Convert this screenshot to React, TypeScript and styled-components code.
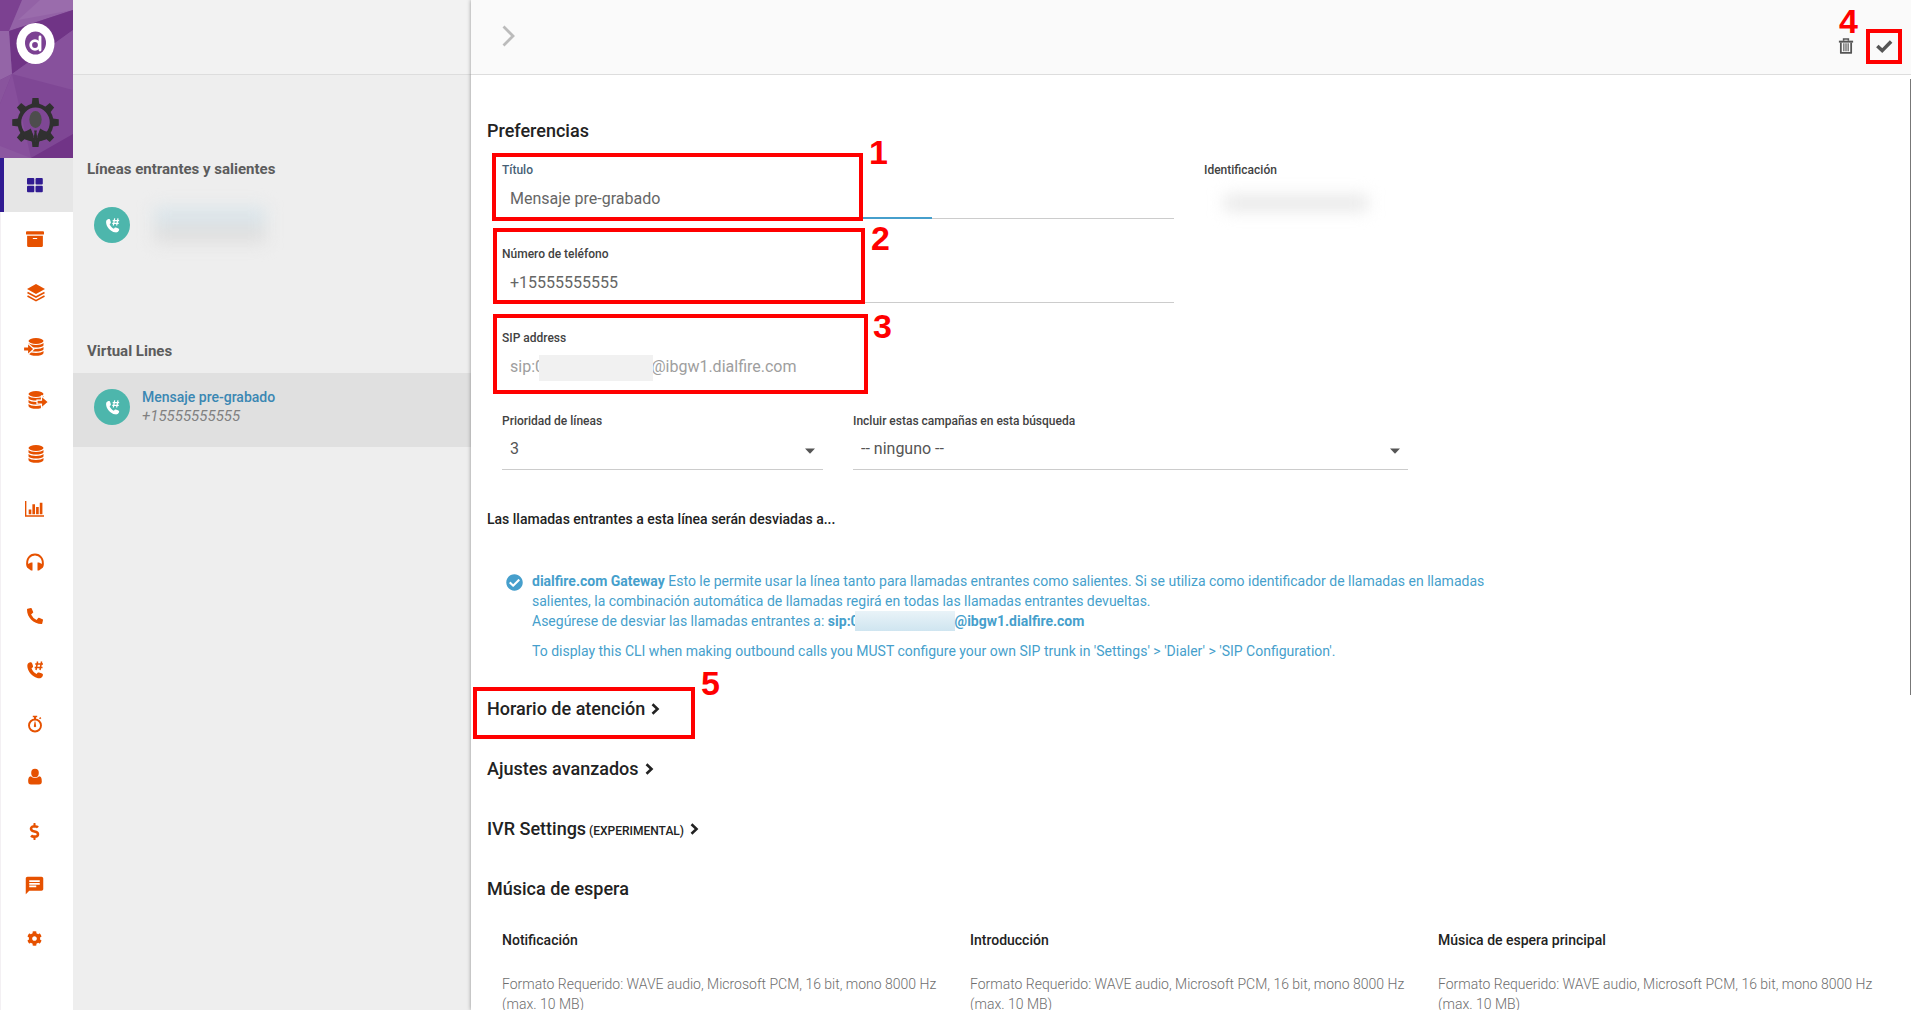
import React from "react";
import styled, { createGlobalStyle, css } from "styled-components";
import { FaArchive, FaCheckCircle, FaCog, FaDollarSign, FaPhoneAlt } from "react-icons/fa";
import { MdChat } from "react-icons/md";

const color = {
  orange: "#e65100",
  indigo: "#311b92",
  teal: "#4db6ac",
  blue: "#469fcc",
  link: "#3a87b3",
  ink: "#222222",
  mark: "#ff0000",
};

const GlobalStyle = createGlobalStyle`
  *, *::before, *::after { box-sizing: border-box; }
  html, body, #root { height: 100%; }
  body {
    margin: 0;
    overflow: hidden;
    background: #fff;
    color: ${color.ink};
    font-family: Roboto, "Liberation Sans", sans-serif;
    font-size: 14px;
    line-height: 20px;
  }
  h1, h2, h3, p, ul { margin: 0; padding: 0; }
  button, input, select { font: inherit; color: inherit; }
`;

const Shell = styled.div`
  display: flex;
  height: 100vh;
`;

/* ---------- navigation rail ---------- */

const Rail = styled.nav`
  flex: 0 0 73px;
  background: #fff;
  border-left: 1px solid #f3f0f3;
`;

const Brand = styled.div`
  height: 158px;
  margin-left: -1px;
  overflow: hidden;

  svg { display: block; }
`;

const RailList = styled.ul`
  display: flex;
  flex-direction: column;
  height: 80vh;
  margin-left: -1px;
  list-style: none;
`;

const RailItem = styled.li`
  flex: 1;
  display: flex;
`;

const RailLink = styled.a<{ $active?: boolean }>`
  flex: 1;
  display: flex;
  align-items: center;
  justify-content: center;
  padding-right: 4px;
  color: ${(p) => (p.$active ? color.indigo : color.orange)};
  ${(p) =>
    p.$active &&
    css`
      background: #e6e6e6;
      box-shadow: inset 4px 0 ${color.indigo};
    `}
`;

/* ---------- list of lines ---------- */

const Lines = styled.aside`
  flex: 0 0 398px;
  background: #eeeeee;
`;

const LinesHeader = styled.div`
  height: 75px;
  background: #f2f2f2;
  border-bottom: 1px solid #dddddd;
`;

const Group = styled.section`
  height: 182px;
  padding-top: 84px;
`;

const GroupTitle = styled.h2`
  padding-left: 14px;
  color: #5c5c5c;
  font-size: 15px;
  font-weight: 700;
  line-height: 20px;
`;

const LineItem = styled.a<{ $selected?: boolean }>`
  display: flex;
  gap: 12px;
  height: 74px;
  margin-top: 12px;
  padding: 16px 21px;
  background: ${(p) => (p.$selected ? "#e0e0e0" : "transparent")};
  text-decoration: none;
`;

const LineBadge = styled.span`
  display: flex;
  align-items: center;
  justify-content: center;
  flex: 0 0 36px;
  height: 36px;
  border-radius: 50%;
  background: ${color.teal};
  color: #fff;
`;

const LineText = styled.span`
  display: flex;
  flex-direction: column;
`;

const LineName = styled.span`
  color: ${color.link};
  font-size: 14px;
  font-weight: 500;
  line-height: 17px;
`;

const LineNumber = styled.span`
  color: #808080;
  font-size: 15px;
  font-style: italic;
  line-height: 20px;
`;

const BlurredLine = styled.span`
  width: 112px;
  height: 36px;
  margin-left: 12px;
  background: linear-gradient(#dbe5ea 50%, #dfdfdf 50%);
  filter: blur(8px);
`;

/* ---------- detail panel ---------- */

const Main = styled.main`
  position: relative;
  flex: 1;
  min-width: 0;
  background: #fff;
  box-shadow: 0 0 4px rgba(0, 0, 0, 0.4);
`;

const Toolbar = styled.header`
  display: flex;
  align-items: center;
  height: 75px;
  padding: 0 8px 2px 31px;
  background: #fafafa;
  border-bottom: 1px solid #dddddd;
`;

const IconButton = styled.button`
  display: flex;
  align-items: center;
  justify-content: center;
  position: relative;
  width: 38px;
  height: 36px;
  padding: 0;
  border: 0;
  background: none;
  color: #555555;
`;

const BackButton = styled.button`
  display: flex;
  margin-right: auto;
  padding: 0;
  border: 0;
  background: none;
  color: #bbbbbb;
`;

const Actions = styled.div`
  display: flex;
  padding-top: 20px;
`;

const Content = styled.div`
  height: calc(100vh - 75px);
  padding: 44px 20px 0 16px;
  overflow: hidden;
`;

const ScrollThumb = styled.div`
  position: absolute;
  top: 79px;
  right: 0;
  width: 1px;
  height: 61vh;
  background: #777777;
`;

const Heading = styled.h1`
  position: relative;
  font-size: 18px;
  font-weight: 500;
  line-height: 24px;
`;

const Grid = styled.div`
  display: grid;
  grid-template-columns: repeat(12, 1fr);
`;

const Form = styled(Grid)`
  row-gap: 25px;
  margin-top: 17px;
`;

const Cell = styled.div<{ $span: number; $start?: number }>`
  position: relative;
  grid-column: ${(p) => (p.$start ? `${p.$start} / ` : "")}span ${(p) => p.$span};
  padding: 0 15px;
`;

const FieldLabel = styled.label<{ $focus?: boolean }>`
  display: block;
  color: ${(p) => (p.$focus ? "#466075" : "#424242")};
  font-size: 12px;
  font-weight: 500;
  line-height: 20px;
`;

const Control = styled.div<{ $line?: boolean; $focus?: boolean }>`
  position: relative;
  ${(p) => p.$line && "border-bottom: 1px solid #cccccc;"}
  ${(p) =>
    p.$focus &&
    css`
      &::after {
        content: "";
        position: absolute;
        left: 36%;
        right: 36%;
        bottom: -1px;
        height: 2px;
        background: ${color.blue};
      }
    `}
`;

const controlText = css`
  display: block;
  width: 100%;
  height: 38px;
  padding: 0 8px 2px;
  border: 0;
  outline: 0;
  background: none;
  font-size: 16px;
  line-height: 20px;
`;

const TextBox = styled.input`
  ${controlText}
  color: #666666;

  &:disabled { color: #9e9e9e; }
`;

const Picker = styled.select`
  ${controlText}
  appearance: none;
  color: #555555;
`;

const Caret = styled.svg`
  position: absolute;
  top: 17px;
  right: 8px;
  width: 10px;
  height: 6px;
  fill: #555555;
  pointer-events: none;
`;

const SipMask = styled.span`
  position: absolute;
  top: 7px;
  left: 37px;
  width: 114px;
  height: 26px;
  background: #f1f1f1;
`;

const BlurredId = styled.div`
  width: 144px;
  height: 16px;
  margin: 15px 0 0 20px;
  background: #e8e8e8;
  filter: blur(8px);
`;

const SubHeading = styled.h2`
  margin-top: 39px;
  font-size: 14px;
  font-weight: 500;
  line-height: 20px;
`;

const Gateway = styled(Grid)`
  margin-top: 42px;
`;

const GatewayBody = styled(Cell)`
  display: flex;
  gap: 9px;
  padding-left: 19px;
  color: ${color.blue};

  svg { flex: none; margin-top: 3px; }
  p + p { margin-top: 10px; }
`;

const InlineMask = styled.span`
  display: inline-block;
  width: 100px;
  height: 20px;
  margin-left: -4px;
  background: linear-gradient(#e9f3f8, #cfe5f0);
  vertical-align: -5px;
`;

const Sections = styled.div`
  display: flex;
  flex-direction: column;
  gap: 36px;
  margin-top: 36px;
`;

const SectionToggle = styled.button`
  display: flex;
  align-items: center;
  gap: 6px;
  height: 24px;
  padding: 0;
  border: 0;
  background: none;
  line-height: 24px;
`;

const Small = styled.small`
  font-size: 12px;
  line-height: 12px;
  white-space: pre;
`;

const Music = styled(Grid)`
  margin-top: 29px;
`;

const MusicTitle = styled.h3`
  font-size: 14px;
  font-weight: 500;
  line-height: 20px;
`;

const MusicNote = styled.p`
  margin-top: 24px;
  color: #6e6e6e;
  font-weight: 300;
`;

/* ---------- numbered marks over the form ---------- */

type MarkBox = { $x: number; $y: number; $w: number; $h: number };

const Mark = styled.span<MarkBox>`
  position: absolute;
  left: ${(p) => p.$x}px;
  top: ${(p) => p.$y}px;
  width: ${(p) => p.$w}px;
  height: ${(p) => p.$h}px;
  border: 4px solid ${color.mark};
  z-index: 2;
  pointer-events: none;
`;

const MarkNumber = styled.span<{ $x: number; $y: number }>`
  position: absolute;
  left: ${(p) => p.$x}px;
  top: ${(p) => p.$y}px;
  color: ${color.mark};
  font: 700 34px/34px "Liberation Sans", Arial, sans-serif;
  z-index: 2;
`;

/* ---------- drawings ---------- */

const BrandArt = () => (
  <svg width="73" height="158" viewBox="0 0 73 158" aria-label="dialfire">
    <rect width="73" height="158" fill="#7f4795" />
    <path d="M0 0H22L9 31L0 32Z" fill="#7c4191" />
    <path d="M22 0H73V10L9 31Z" fill="#9362a6" />
    <path d="M40 0H73V10L18 20Z" fill="#9a6cac" />
    <path d="M73 10L9 31L12 74L73 30Z" fill="#703486" />
    <path d="M73 30L12 74L73 90Z" fill="#87519c" />
    <path d="M0 31H9L12 74L0 80Z" fill="#9465a7" />
    <path d="M12 74L0 80V104Z" fill="#89549d" />
    <path d="M12 74L0 104V158H31Z" fill="#874f9c" />
    <path d="M73 134L31 158H73Z" fill="#713487" />
    <path d="M0 146L31 158H0Z" fill="#8c58a0" />
    <ellipse cx="35.500" cy="43.500" rx="19" ry="20.500" fill="#fff" />
    <ellipse cx="35.500" cy="43" rx="10.500" ry="11.500" fill="#7b4192" />
    <circle cx="35" cy="45" r="4.300" fill="none" stroke="#fff" strokeWidth="2.800" />
    <path d="M40 37V50" stroke="#fff" strokeWidth="2.800" strokeLinecap="round" />
    <g transform="translate(35.500 122.500) scale(0.950 1)" fill="#303030">
      {[0, 45, 90, 135, 180, 225, 270, 315].map((a) => (
        <path key={a} transform={`rotate(${a})`} d="M-4 -18L-3.200 -24.500H3.200L4 -18Z" />
      ))}
      <circle r="17" fill="none" stroke="#303030" strokeWidth="4" />
      <ellipse cy="-3" rx="6.500" ry="8.500" fill="#4d4d4d" />
      <path d="M-15 10C-12 9 -7 8 -5 6L0 18L5 6C7 8 12 9 15 10L11 17L0 20L-11 17Z" />
      <path d="M-3.500 8L0 19L3.500 8L2 8L1.500 10L2 15L0 18L-2 15L-1.500 10L-2 8Z" fill="#7f4795" />
      <path d="M-1.500 8H1.500L1 10L2 16L0 18.500L-2 16L-1 10Z" />
    </g>
  </svg>
);

const Drawing = ({ size = 18, children }: { size?: number; children: React.ReactNode }) => (
  <svg width={size} height={size} viewBox="0 0 18 18" fill="currentColor" overflow="visible" aria-hidden="true">
    {children}
  </svg>
);

const GridIcon = () => (
  <Drawing>
    <rect x="1" y="2" width="7.300" height="6.600" rx="1" />
    <rect x="9.500" y="2" width="7.300" height="6.600" rx="1" />
    <rect x="1" y="9.700" width="7.300" height="6.600" rx="1" />
    <rect x="9.500" y="9.700" width="7.300" height="6.600" rx="1" />
  </Drawing>
);

const LayersIcon = () => (
  <Drawing>
    <path d="M10 0L19 5L10 10L1 5Z" />
    <path d="M1.500 8.500L10 13L18.500 8.500M1.500 12L10 16.700L18.500 12" fill="none" stroke="currentColor" strokeWidth="1.600" />
  </Drawing>
);

const Disks = () => (
  <>
    <ellipse cx="10" cy="3" rx="7.500" ry="2.900" />
    <path d="M2.500 5C4.500 7.600 15.500 7.600 17.500 5V7.500C15.500 10.300 4.500 10.300 2.500 7.500Z" />
    <path d="M2.500 9C4.500 11.600 15.500 11.600 17.500 9V11.500C15.500 14.200 4.500 14.200 2.500 11.500Z" />
    <path d="M2.500 13C4.500 15.600 15.500 15.600 17.500 13V15.200C15.500 18.700 4.500 18.700 2.500 15.200Z" />
  </>
);

const DatabaseIcon = () => (
  <Drawing>
    <Disks />
  </Drawing>
);

const DatabaseInIcon = () => (
  <Drawing>
    <Disks />
    <path d="M-2.500 9H1.500V5L8 11L1.500 17V13H-2.500Z" stroke="#fff" strokeWidth="1.200" />
  </Drawing>
);

const DatabaseOutIcon = () => (
  <Drawing>
    <Disks />
    <path d="M11 9.200H15.500V5L22.500 11L15.500 17V13H11Z" stroke="#fff" strokeWidth="1.200" />
  </Drawing>
);

const ChartIcon = () => (
  <Drawing size={19}>
    <path d="M0 2H1.300V15.500H18V16.700H0Z" />
    <path d="M3.500 10H6V14.500H3.500ZM7 5H9.500V14.500H7ZM10.500 7.500H13V14.500H10.500ZM14 3.500H16.500V14.500H14Z" />
  </Drawing>
);

const HeadphonesIcon = () => (
  <Drawing>
    <path d="M1.500 13.500C-2 -2.500 20 -2.500 16.500 13.500" fill="none" stroke="currentColor" strokeWidth="2" />
    <path d="M6.500 9.500V17.500H5L1 14.500V11.500L5 9.500ZM11.500 9.500V17.500H13L17 14.500V11.500L13 9.500Z" />
  </Drawing>
);

const StopwatchIcon = () => (
  <Drawing>
    <circle cx="9" cy="10.500" r="6" fill="none" stroke="currentColor" strokeWidth="1.900" />
    <path d="M6.800 0.800H11.200V2.200H10V4.500H8V2.200H6.800Z" />
    <path d="M13.500 3.800L14.800 2.600" stroke="currentColor" strokeWidth="1.500" />
    <path d="M8.600 6.500H9.400L10.200 11.500Q9 13 7.800 11.500Z" />
  </Drawing>
);

const UserIcon = () => (
  <Drawing>
    <ellipse cx="9" cy="5" rx="3.800" ry="4.200" />
    <path d="M5 8.300C6.500 10.500 11.500 10.500 13 8.300C15.500 8.500 15.800 11 15.800 13.500C15.800 15.500 15 16.500 13 16.500H5C3 16.500 2.200 15.500 2.200 13.500C2.200 11 2.500 8.500 5 8.300Z" />
  </Drawing>
);

const PhoneHashIcon = ({ size = 18 }: { size?: number }) => (
  <Drawing size={size}>
    <path d="M3.500 1.500C5 0.800 5.800 1.200 6.400 3L7 5C7.200 6 6.800 6.500 5.500 7.300C6.300 9.700 8.300 12 10.700 13C11.500 11.600 12 11.300 13 11.500L15.500 12.300C17 12.900 17.300 13.600 16.700 15C15.800 17 14 17.600 12 17.200C6.500 16 1.500 10.500 1.300 5C1.300 3.200 2 2 3.500 1.500Z" />
    <path d="M11.600 0.500L10 9M15.600 0.500L14 9M9.200 3H17M8.700 6.500H16.500" fill="none" stroke="currentColor" strokeWidth="1.500" />
  </Drawing>
);

const BinIcon = () => (
  <Drawing size={16}>
    <path d="M6.300 3V1.200H11.700V3" fill="none" stroke="currentColor" strokeWidth="1.700" />
    <path d="M1 3H17V5.200H1Z" />
    <path d="M3.200 5V16.800H14.800V5" fill="none" stroke="currentColor" strokeWidth="2" strokeLinejoin="round" />
    <path d="M6.600 6V15M9 6V15M11.400 6V15" stroke="currentColor" strokeWidth="1.300" />
  </Drawing>
);

const CheckIcon = () => (
  <Drawing size={16}>
    <path d="M1.500 9L7 14.200L17 4" fill="none" stroke="currentColor" strokeWidth="4" />
  </Drawing>
);

const ToggleChevron = () => (
  <svg width="9" height="12" viewBox="0 0 9 12" fill="none" stroke="currentColor" strokeWidth="2.600" aria-hidden="true">
    <path d="M1.500 1.300L6.500 6L1.500 10.700" />
  </svg>
);

const NAV: { label: string; icon: React.ReactNode }[] = [
  { label: "Inicio", icon: <GridIcon /> },
  { label: "Archivo", icon: <FaArchive size={18} /> },
  { label: "Capas", icon: <LayersIcon /> },
  { label: "Importar", icon: <DatabaseInIcon /> },
  { label: "Exportar", icon: <DatabaseOutIcon /> },
  { label: "Datos", icon: <DatabaseIcon /> },
  { label: "Informes", icon: <ChartIcon /> },
  { label: "Agentes", icon: <HeadphonesIcon /> },
  { label: "Llamadas", icon: <FaPhoneAlt size={16} /> },
  { label: "Líneas", icon: <PhoneHashIcon /> },
  { label: "Tiempos", icon: <StopwatchIcon /> },
  { label: "Usuarios", icon: <UserIcon /> },
  { label: "Costes", icon: <FaDollarSign size={17} /> },
  { label: "Mensajes", icon: <MdChat size={21} /> },
  { label: "Ajustes", icon: <FaCog size={15} /> },
];

const MUSIC = ["Notificación", "Introducción", "Música de espera principal"];

const DownCaret = () => (
  <Caret viewBox="0 0 10 6" aria-hidden="true">
    <path d="M0 0.500H10L5 5.800Z" />
  </Caret>
);

export default function App() {
  return (
    <>
      <GlobalStyle />
      <Shell>
        <Rail>
          <Brand><BrandArt /></Brand>
          <RailList>
            {NAV.map((item, i) => (
              <RailItem key={item.label}>
                <RailLink href="#" $active={i === 0} aria-label={item.label}>{item.icon}</RailLink>
              </RailItem>
            ))}
          </RailList>
        </Rail>

        <Lines>
          <LinesHeader />
          <Group>
            <GroupTitle>Líneas entrantes y salientes</GroupTitle>
            <LineItem href="#" aria-label="Línea">
              <LineBadge><PhoneHashIcon size={15} /></LineBadge>
              <BlurredLine />
            </LineItem>
          </Group>
          <Group>
            <GroupTitle>Virtual Lines</GroupTitle>
            <LineItem href="#" $selected>
              <LineBadge><PhoneHashIcon size={15} /></LineBadge>
              <LineText>
                <LineName>Mensaje pre-grabado</LineName>
                <LineNumber>+15555555555</LineNumber>
              </LineText>
            </LineItem>
          </Group>
        </Lines>

        <Main>
          <Toolbar>
            <BackButton aria-label="Cerrar panel">
              <svg width="14" height="22" viewBox="0 0 14 22" fill="none" stroke="currentColor" strokeWidth="2.800">
                <path d="M1.500 1.500L11 11L1.500 20.500" />
              </svg>
            </BackButton>
            <Actions>
              <IconButton aria-label="Eliminar">
                <BinIcon />
                <MarkNumber $x={12} $y={-24}>4</MarkNumber>
              </IconButton>
              <IconButton aria-label="Guardar">
                <CheckIcon />
                <Mark $x={1} $y={1} $w={36} $h={35} />
              </IconButton>
            </Actions>
          </Toolbar>

          <Content>
            <Heading>Preferencias</Heading>
            <Form as="form">
              <Cell $span={6}>
                <FieldLabel htmlFor="title" $focus>Título</FieldLabel>
                <Control $line $focus>
                  <TextBox id="title" defaultValue="Mensaje pre-grabado" />
                </Control>
                <Mark $x={5} $y={-7} $w={371} $h={68} />
                <MarkNumber $x={382} $y={-25}>1</MarkNumber>
              </Cell>
              <Cell $span={6}>
                <FieldLabel as="span">Identificación</FieldLabel>
                <BlurredId />
              </Cell>
              <Cell $span={6}>
                <FieldLabel htmlFor="phone">Número de teléfono</FieldLabel>
                <Control $line>
                  <TextBox id="phone" defaultValue="+15555555555" />
                </Control>
                <Mark $x={6} $y={-16} $w={372} $h={76} />
                <MarkNumber $x={384} $y={-23}>2</MarkNumber>
              </Cell>
              <Cell $span={6} $start={1}>
                <FieldLabel htmlFor="sip">SIP address</FieldLabel>
                <Control>
                  <TextBox id="sip" disabled defaultValue={"sip:0" + " ".repeat(27) + "@ibgw1.dialfire.com"} />
                  <SipMask />
                </Control>
                <Mark $x={6} $y={-14} $w={375} $h={80} />
                <MarkNumber $x={386} $y={-19}>3</MarkNumber>
              </Cell>
              <Cell $span={3} $start={1}>
                <FieldLabel htmlFor="priority">Prioridad de líneas</FieldLabel>
                <Control $line>
                  <Picker id="priority"><option>3</option></Picker>
                  <DownCaret />
                </Control>
              </Cell>
              <Cell $span={5}>
                <FieldLabel htmlFor="campaigns">Incluir estas campañas en esta búsqueda</FieldLabel>
                <Control $line>
                  <Picker id="campaigns"><option>-- ninguno --</option></Picker>
                  <DownCaret />
                </Control>
              </Cell>
            </Form>

            <SubHeading>Las llamadas entrantes a esta línea serán desviadas a...</SubHeading>
            <Gateway>
              <GatewayBody $span={9}>
                <FaCheckCircle size={17} />
                <div>
                  <p>
                    <b>dialfire.com Gateway</b> Esto le permite usar la línea tanto para llamadas entrantes como
                    salientes. Si se utiliza como identificador de llamadas en llamadas salientes, la combinación
                    automática de llamadas regirá en todas las llamadas entrantes devueltas.
                    <br />
                    Asegúrese de desviar las llamadas entrantes a: <b>sip:0<InlineMask />@ibgw1.dialfire.com</b>
                  </p>
                  <p>
                    To display this CLI when making outbound calls you MUST configure your own SIP trunk in
                    'Settings' &gt; 'Dialer' &gt; 'SIP Configuration'.
                  </p>
                </div>
              </GatewayBody>
            </Gateway>

            <Sections>
              <Heading>
                <SectionToggle>Horario de atención <ToggleChevron /></SectionToggle>
                <Mark $x={-14} $y={-10} $w={222} $h={52} />
                <MarkNumber $x={214} $y={-31}>5</MarkNumber>
              </Heading>
              <Heading>
                <SectionToggle>Ajustes avanzados <ToggleChevron /></SectionToggle>
              </Heading>
              <Heading>
                <SectionToggle>
                  <span>IVR Settings<Small> (EXPERIMENTAL)</Small></span> <ToggleChevron />
                </SectionToggle>
              </Heading>
              <Heading>Música de espera</Heading>
            </Sections>

            <Music>
              {MUSIC.map((title) => (
                <Cell $span={4} key={title}>
                  <MusicTitle>{title}</MusicTitle>
                  <MusicNote>Formato Requerido: WAVE audio, Microsoft PCM, 16 bit, mono 8000 Hz (max. 10 MB)</MusicNote>
                </Cell>
              ))}
            </Music>
          </Content>
          <ScrollThumb />
        </Main>
      </Shell>
    </>
  );
}
